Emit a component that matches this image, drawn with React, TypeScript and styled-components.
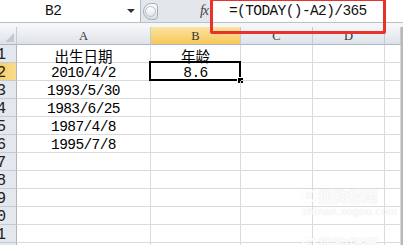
import React from 'react'
import styled, {createGlobalStyle} from 'styled-components'

const GlobalStyle = createGlobalStyle`
  html, body {
    margin: 0;
    padding: 0;
    background: #ffffff;
    overflow: hidden;
  }
`

const MONO = `"Liberation Mono", "Noto Sans CJK SC", monospace`
const CJK = `"Noto Sans CJK SC", "DejaVu Sans", sans-serif`

const Sheet = styled.div`
  position: relative;
  width: 403px;
  height: 245px;
  overflow: hidden;
  background: #ffffff;
  font-family: ${MONO};
`

const FormulaBar = styled.div`
  display: flex;
  align-items: stretch;
  height: 23px;
  box-sizing: border-box;
  background: #e3e7ec;
  border-bottom: 1px solid #b9c0c9;
`

const NameBox = styled.div`
  position: relative;
  width: 141px;
  box-sizing: border-box;
  background: #ffffff;
  border-right: 1px solid #b3bac4;
  display: flex;
  align-items: center;
  padding-left: 45px;
  font-size: 14.5px;
  letter-spacing: -0.4px;
  color: #111;
`

const DropArrow = styled.span`
  position: absolute;
  right: 5px;
  top: 9px;
  width: 0;
  height: 0;
  border-left: 4px solid transparent;
  border-right: 4px solid transparent;
  border-top: 4px solid #333;
`

const Grip = styled.div`
  margin: 3px 0 0 2px;
  width: 15px;
  height: 17px;
  box-sizing: border-box;
  border: 1px solid #a3abb5;
  border-radius: 9px 4px 4px 9px;
  background: linear-gradient(#fbfcfd, #d9dee4);
  display: flex;
  align-items: center;
  justify-content: flex-start;
  padding-left: 1px;

  &::before {
    content: '';
    width: 11px;
    height: 11px;
    border-radius: 50%;
    border: 1px solid #b8bfc8;
    background: linear-gradient(#ffffff, #e2e6eb);
    box-sizing: border-box;
  }
`

const FxLabel = styled.div`
  width: 53px;
  display: flex;
  align-items: center;
  justify-content: flex-end;
  padding-right: 3px;
  box-sizing: border-box;
  font-family: "Liberation Serif", serif;
  font-style: italic;
  font-size: 14px;
  color: #444;
  letter-spacing: -1px;
`

const FormulaInput = styled.div`
  flex: 1;
  background: #ffffff;
  border-left: 1px solid #b3bac4;
  display: flex;
  align-items: center;
  padding-left: 17px;
  font-size: 14.5px;
  letter-spacing: -0.6px;
  color: #111;
  white-space: pre;
`

const Spacer = styled.div`
  height: 4px;
  background: #f4f6f8;
`

const Grid = styled.div`
  display: grid;
  grid-template-columns: 17px 134px 90px 72px 72px 16px 2px;
  grid-auto-rows: 18px;
`

const HeadCell = styled.div<{ $active?: boolean }>`
  box-sizing: border-box;
  border-right: 1px solid #c5cbd3;
  border-bottom: 1px solid #aeb6c1;
  background: ${p => p.$active
    ? 'linear-gradient(#fbe3a0, #f6c95a)'
    : 'linear-gradient(#f3f5f8, #dfe3e9)'};
  display: flex;
  align-items: center;
  justify-content: center;
  padding-top: 1px;
  font-family: "Liberation Serif", serif;
  font-size: 12.5px;
  color: #333;
  overflow: hidden;
`

const Corner = styled(HeadCell)`
  position: relative;

  &::after {
    content: '';
    position: absolute;
    right: 2px;
    bottom: 2px;
    border-left: 9px solid transparent;
    border-bottom: 9px solid #c3c9d1;
  }
`

const RowHead = styled.div<{ $active?: boolean }>`
  box-sizing: border-box;
  border-right: 1px solid #aeb6c1;
  border-bottom: 1px solid #c5cbd3;
  background: ${p => p.$active
    ? 'linear-gradient(90deg, #f7cf6c, #f9dc8e)'
    : '#e4e8ee'};
  display: flex;
  align-items: center;
  justify-content: flex-end;
  padding: 2px 10px 0 0;
  font-size: 16px;
  color: #222;
  overflow: hidden;
  white-space: nowrap;
`

const Cell = styled.div<{ $selected?: boolean }>`
  position: relative;
  box-sizing: border-box;
  border-right: 1px solid #dadada;
  border-bottom: 1px solid #dadada;
  text-align: center;
  line-height: 17px;
  padding-top: 2px;
  font-size: 14.5px;
  letter-spacing: -0.6px;
  color: #000;
  white-space: nowrap;

  ${p => p.$selected && `
    &::before {
      content: '';
      position: absolute;
      left: -2px;
      top: -2px;
      right: -1px;
      bottom: -1px;
      border: 2px solid #000;
      pointer-events: none;
    }
    &::after {
      content: '';
      position: absolute;
      right: -3px;
      bottom: -3px;
      width: 5px;
      height: 5px;
      background: #000;
      outline: 1px solid #fff;
    }
  `}
`

const CjkText = styled.span`
  font-family: ${CJK};
  font-size: 14.5px;
  letter-spacing: 0;
`

const Scroll = styled.div`
  background: #b8b8b8;
`

const Callout = styled.div`
  position: absolute;
  left: 210px;
  top: -2px;
  width: 176px;
  height: 36px;
  box-sizing: border-box;
  border: 3px solid #e8322b;
  border-radius: 2px;
`

const Watermark = styled.div<{ $top: number }>`
  position: absolute;
  left: 302px;
  top: ${p => p.$top}px;
  display: flex;
  flex-direction: column;
  gap: 2px;
  color: rgba(255, 255, 255, 0.92);
  text-shadow: 0 0 1px rgba(150, 150, 150, 0.35);
`

const MarkTitle = styled.div`
  display: flex;
  align-items: center;
  gap: 2px;
  font-family: ${CJK};
  font-weight: 700;
  font-size: 15px;
  line-height: 16px;
`

const MarkLogo = styled.span`
  width: 14px;
  height: 14px;
  border-radius: 50%;
  border: 2px solid rgba(255, 255, 255, 0.92);
  box-shadow: 0 0 1px rgba(150, 150, 150, 0.4);
  box-sizing: border-box;
  display: flex;
  align-items: center;
  justify-content: center;
  font-family: "DejaVu Sans", sans-serif;
  font-size: 9px;
`

const MarkUrl = styled.div`
  font-family: "DejaVu Sans", sans-serif;
  font-size: 10px;
  letter-spacing: 0.3px;
`

const columns = ['A', 'B', 'C', 'D', '']

const data: Record<number, string[]> = {
  1: ['出生日期', '年龄'],
  2: ['2010/4/2', '8.6'],
  3: ['1993/5/30'],
  4: ['1983/6/25'],
  5: ['1987/4/8'],
  6: ['1995/7/8'],
}

const isCjk = (s: string) => /[\u4e00-\u9fff]/.test(s)

const rows = Array.from({length: 12}, (_, i) => i + 1)

export default function App() {
  return (
    <Sheet>
      <GlobalStyle/>
      <FormulaBar>
        <NameBox>B2<DropArrow/></NameBox>
        <Grip/>
        <FxLabel>fx</FxLabel>
        <FormulaInput>=(TODAY()-A2)/365</FormulaInput>
      </FormulaBar>
      <Spacer/>
      <Grid>
        <Corner/>
        {columns.map((c, i) => (
          <HeadCell key={i} $active={c === 'B'}>{c}</HeadCell>
        ))}
        <Scroll/>
        {rows.map(r => (
          <React.Fragment key={r}>
            <RowHead $active={r === 2}>{r}</RowHead>
            {columns.map((c, ci) => {
              const v = data[r]?.[ci] ?? ''
              return (
                <Cell key={ci} $selected={r === 2 && c === 'B'}>
                  {isCjk(v) ? <CjkText>{v}</CjkText> : v}
                </Cell>
              )
            })}
            <Scroll/>
          </React.Fragment>
        ))}
      </Grid>
      <Callout/>
      <Watermark $top={188}>
        <MarkTitle><MarkLogo>S</MarkLogo>搜狗指南</MarkTitle>
        <MarkUrl>zhinan.sogou.com</MarkUrl>
      </Watermark>
      <Watermark $top={236}>
        <MarkTitle><MarkLogo>S</MarkLogo>搜狗指南</MarkTitle>
      </Watermark>
    </Sheet>
  )
}
